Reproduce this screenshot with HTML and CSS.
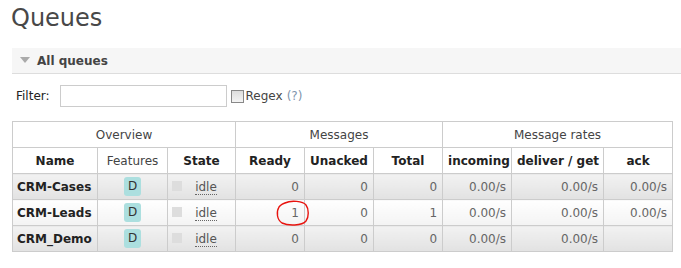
FILE: index.html
```html
<!DOCTYPE html>
<html>
<head>
<meta charset="utf-8">
<title>Queues</title>
<link rel="stylesheet" href="styles.css">
</head>
<body>
	<div id="main">
		<h1>Queues</h1>
		<div class="section-title"><span class="arrow"></span>All queues</div>
		<div class="filter">
			<label for="filter">Filter:</label>
			<input type="text" id="filter">
			<span class="regex"><span class="box"></span>Regex <span class="help">(?)</span></span>
		</div>
		<table class="queues">
			<colgroup>
				<col style="width:85px"><col style="width:70px"><col style="width:68px">
				<col style="width:69px"><col style="width:69px"><col style="width:69px">
				<col style="width:69px"><col style="width:92px"><col style="width:69px">
			</colgroup>
			<thead>
				<tr class="group">
					<th colspan="3">Overview</th>
					<th colspan="3">Messages</th>
					<th colspan="3">Message rates</th>
				</tr>
				<tr>
					<th>Name</th>
					<th class="plain">Features</th>
					<th>State</th>
					<th>Ready</th>
					<th>Unacked</th>
					<th>Total</th>
					<th>incoming</th>
					<th>deliver / get</th>
					<th>ack</th>
				</tr>
			</thead>
			<tbody>
				<tr class="alt1">
					<td class="name">CRM-Cases</td>
					<td class="c"><span class="badge">D</span></td>
					<td class="state"><span class="status"></span><abbr>idle</abbr></td>
					<td class="r">0</td>
					<td class="r">0</td>
					<td class="r">0</td>
					<td class="r">0.00/s</td>
					<td class="r">0.00/s</td>
					<td class="r">0.00/s</td>
				</tr>
				<tr class="alt2">
					<td class="name">CRM-Leads</td>
					<td class="c"><span class="badge">D</span></td>
					<td class="state"><span class="status"></span><abbr>idle</abbr></td>
					<td class="r marked">1
						<svg class="ring" width="38" height="28" viewBox="0 0 38 28">
							<path d="M11 3 C17 0 29 1 32 5 C35 9 35 17 32 21 C28 26 14 26 8 23 C3 20 2 12 5 7 C7 4 10 3 14 2" fill="none" stroke="#e8140f" stroke-width="1.4" stroke-linecap="round"/>
						</svg>
					</td>
					<td class="r">0</td>
					<td class="r">1</td>
					<td class="r">0.00/s</td>
					<td class="r">0.00/s</td>
					<td class="r">0.00/s</td>
				</tr>
				<tr class="alt1">
					<td class="name">CRM_Demo</td>
					<td class="c"><span class="badge">D</span></td>
					<td class="state"><span class="status"></span><abbr>idle</abbr></td>
					<td class="r">0</td>
					<td class="r">0</td>
					<td class="r">0</td>
					<td class="r">0.00/s</td>
					<td class="r">0.00/s</td>
					<td class="r"></td>
				</tr>
			</tbody>
		</table>
	</div>
</body>
</html>
```

FILE: styles.css
```css
body {
	margin: 0;
	background-color: #fff;
	font-family: "DejaVu Sans", Verdana, sans-serif;
	font-size: 12px;
	color: #484848;
}

#main {
	padding-left: 12px;
}

h1 {
	margin: 4px 0 0 -1px;
	font-size: 24px;
	line-height: 28px;
	font-weight: normal;
	color: #484848;
}

.section-title {
	margin-top: 16px;
	height: 25px;
	line-height: 26px;
	background-color: #f6f6f6;
	border-bottom: 1px solid #ddd;
	font-weight: bold;
	font-size: 12px;
	color: #444;
	padding-left: 8px;
}

.arrow {
	display: inline-block;
	width: 0;
	height: 0;
	border-left: 5px solid transparent;
	border-right: 5px solid transparent;
	border-top: 6px solid #aaa;
	margin-right: 7px;
	vertical-align: 2px;
}

.filter {
	margin-top: 11px;
	height: 22px;
	display: flex;
	align-items: center;
	padding-left: 4px;
	color: #222;
}

.filter label {
	margin-right: 10px;
}

.filter input {
	width: 167px;
	height: 22px;
	box-sizing: border-box;
	border: 1px solid #ccc;
	margin: 0;
	padding: 0 3px;
}

.regex {
	display: flex;
	align-items: center;
	margin-left: 4px;
	color: #444;
}

.box {
	width: 11px;
	height: 11px;
	border: 1px solid #888;
	background: linear-gradient(#ddd, #f4f4f4);
	margin-right: 2px;
}

.help {
	color: #7f95ad;
	margin-left: 4px;
}

table.queues {
	margin-top: 14px;
	width: 660px;
	table-layout: fixed;
	border-collapse: collapse;
	font-size: 12px;
}

.queues th,
.queues td {
	border: 1px solid #ccc;
	height: 25px;
	padding: 0 5px;
	white-space: nowrap;
}

.queues th {
	color: #222;
	text-align: center;
	font-weight: bold;
}

.queues tr.group th,
.queues th.plain {
	font-weight: normal;
	color: #444;
}

.queues td {
	color: #666;
}

.queues td.name {
	font-weight: bold;
	color: #222;
	padding-left: 4px;
}

.queues td.r {
	text-align: right;
}

.queues td.c {
	text-align: center;
}

tr.alt1 td {
	background: linear-gradient(#f2f2f2, #e2e2e2);
}

tr.alt2 td {
	background: linear-gradient(#ffffff, #f3f3f3);
}

.badge {
	display: inline-block;
	width: 17px;
	height: 19px;
	line-height: 19px;
	border-radius: 3px;
	background-color: #acdfdf;
	color: #333;
	text-align: center;
}

.queues td.state {
	text-align: center;
	padding-left: 4px;
}

.status {
	float: left;
	width: 10px;
	height: 10px;
	background-color: #ddd;
	margin-top: 1px;
}

abbr {
	text-decoration: none;
	border-bottom: 1px dotted #666;
	color: #555;
}

.marked {
	position: relative;
}

.ring {
	position: absolute;
	left: 38px;
	top: 0;
}
```
